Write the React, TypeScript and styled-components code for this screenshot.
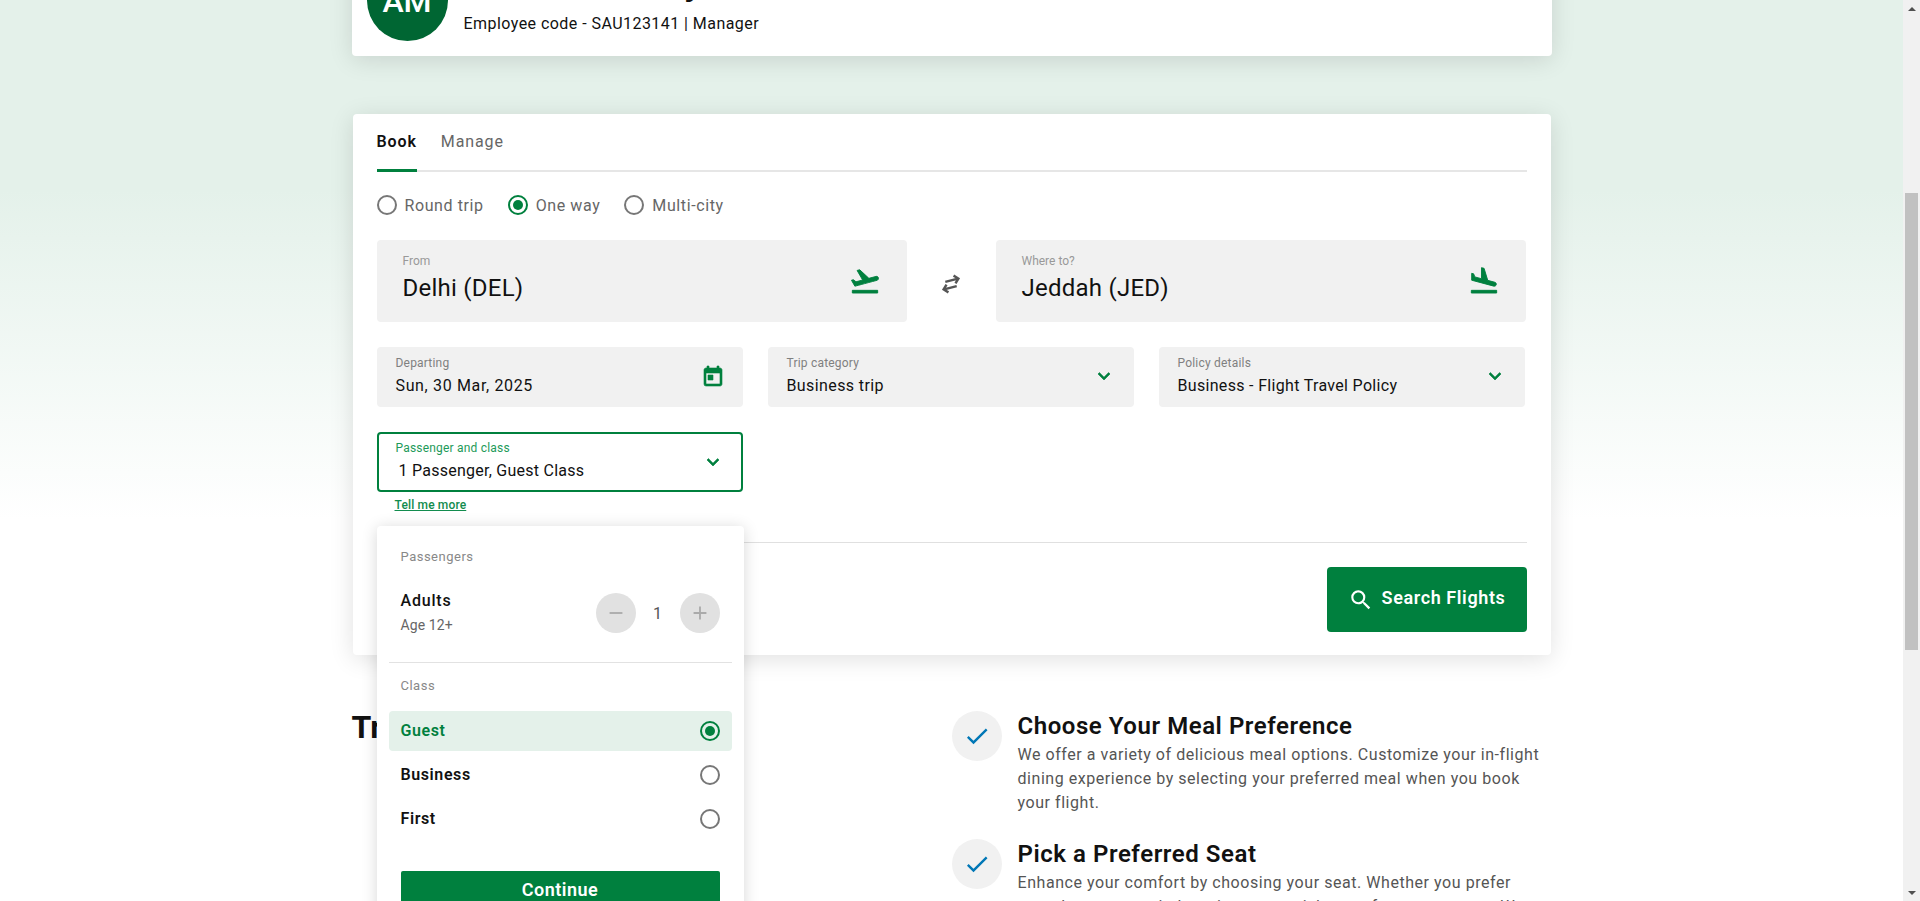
import React from "react";
import styled, { createGlobalStyle } from "styled-components";
import { MdFlightLand, MdFlightTakeoff, MdSearch, MdToday, MdExpandMore, MdCheck, MdAdd, MdRemove } from "react-icons/md";

const green = "#00803e";

const Global = createGlobalStyle`
  html, body { margin: 0; padding: 0; height: 901px; overflow: hidden; background: #fff; }
  body { font-family: Roboto, "Liberation Sans", sans-serif; color: #111; }
  * { box-sizing: border-box; }
`;

const Shell = styled.div`
  display: flex;
  height: 901px;
  overflow: hidden;
`;
const Viewport = styled.main`
  flex: 1;
  min-width: 0;
  height: 901px;
  overflow: hidden;
  background: linear-gradient(180deg, #e4f1ea 0, #e4f1ea 190px, #ffffff 520px);
`;
const Content = styled.div`
  width: 1200px;
  margin: -54px auto 0;
`;
const HeaderCard = styled.section`
  height: 110px;
  background: #fff;
  border-radius: 4px;
  box-shadow: 0 4px 24px rgba(0, 0, 0, 0.12);
  display: flex;
  align-items: flex-end;
  padding: 0 0 15px 15px;
  gap: 16px;
`;
const Avatar = styled.div`
  width: 81px;
  height: 81px;
  border-radius: 50%;
  background: #006633;
  color: #fff;
  font-size: 32px;
  font-weight: 500;
  display: flex;
  align-items: center;
  justify-content: center;
  flex: none;
`;
const Who = styled.div`
  display: flex;
  flex-direction: column;
  padding-bottom: 7px;
`;
const Name = styled.h1`
  margin: 0 0 11px;
  font-size: 36px;
  line-height: 42px;
  font-weight: 700;
  color: #111;
`;
const Code = styled.div`
  font-size: 16px;
  line-height: 20px;
  letter-spacing: 0.45px;
  color: #111;
`;
const BookingCard = styled.section`
  margin: 58px 1px 0;
  height: 541px;
  background: #fff;
  border-radius: 4px;
  padding: 0 24px;
  box-shadow: 0 4px 24px rgba(0, 0, 0, 0.12);
`;
const Tabs = styled.div`
  display: flex;
  gap: 24px;
  height: 58px;
  border-bottom: 2px solid #e6e6e6;
`;
const Tab = styled.div<{ $active?: boolean }>`
  height: 58px;
  padding-top: 18px;
  font-size: 16px;
  line-height: 20px;
  letter-spacing: 0.9px;
  font-weight: ${(p) => (p.$active ? 600 : 400)};
  color: ${(p) => (p.$active ? "#111" : "#666")};
  border-bottom: 3px solid ${(p) => (p.$active ? green : "transparent")};
`;
const TripRow = styled.div`
  display: flex;
  gap: 24px;
  margin-top: 23px;
  height: 20px;
`;
const TripOption = styled.label`
  display: flex;
  align-items: center;
  gap: 8px;
  font-size: 16px;
  letter-spacing: 0.6px;
  color: #666;
`;
const Radio = styled.span<{ $on?: boolean }>`
  width: 20px;
  height: 20px;
  border-radius: 50%;
  flex: none;
  border: 2px solid ${(p) => (p.$on ? green : "#777")};
  display: flex;
  align-items: center;
  justify-content: center;
  &::after {
    content: "";
    width: 10px;
    height: 10px;
    border-radius: 50%;
    background: ${(p) => (p.$on ? green : "transparent")};
  }
`;
const Cities = styled.div`
  display: flex;
  align-items: center;
  margin-top: 25px;
`;
const CityField = styled.div`
  width: 530px;
  height: 82px;
  border-radius: 4px;
  background: #f1f1f1;
  padding: 14px 26px 0 26px;
  display: flex;
  justify-content: space-between;
  color: ${green};
`;
const CityLabel = styled.div`
  font-size: 12px;
  line-height: 14px;
  color: #999;
`;
const CityValue = styled.div`
  margin-top: 5px;
  font-size: 24px;
  line-height: 30px;
  letter-spacing: 0.25px;
  color: #111;
`;
const CityIcon = styled.span`
  display: flex;
  margin-top: 11px;
  svg {
    stroke-width: 0.7;
  }
  svg path[fill="none"] {
    stroke: none;
  }
`;
const SwapBox = styled.div`
  width: 89px;
  padding-top: 6px;
  display: flex;
  justify-content: center;
  color: #555;
`;
const Row = styled.div`
  display: grid;
  grid-template-columns: repeat(3, 366px);
  column-gap: 25px;
  margin-top: 25px;
`;
const SelectBox = styled.div<{ $focus?: boolean }>`
  height: 60px;
  border-radius: 4px;
  background: ${(p) => (p.$focus ? "#fff" : "#f1f1f1")};
  border: ${(p) => (p.$focus ? `2px solid ${green}` : "none")};
  padding: ${(p) => (p.$focus ? "7px 16px 0 16px" : "9px 18px 0 18px")};
  display: flex;
  justify-content: space-between;
  align-items: flex-start;
`;
const SelectLabel = styled.div<{ $focus?: boolean }>`
  font-size: 12px;
  line-height: 14px;
  letter-spacing: 0.2px;
  padding-left: 1px;
  color: ${(p) => (p.$focus ? "#1d9a59" : "#808080")};
`;
const SelectValue = styled.div<{ $focus?: boolean; $spacing: number }>`
  margin-top: 5px;
  padding-left: ${(p) => (p.$focus ? "4px" : "1px")};
  font-size: 16px;
  line-height: 22px;
  letter-spacing: ${(p) => p.$spacing}px;
  color: #111;
`;
const SelectIcon = styled.span<{ $top: number }>`
  display: flex;
  margin-top: ${(p) => p.$top}px;
  color: ${green};
  svg {
    stroke-width: 0.6;
  }
  svg path[fill="none"] {
    stroke: none;
  }
`;
const PassengerWrap = styled.div`
  position: relative;
`;
const TellMore = styled.a`
  display: block;
  margin: 5px 0 0 18px;
  font-size: 12px;
  line-height: 16px;
  font-weight: 500;
  letter-spacing: 0.15px;
  color: #128c4e;
  text-decoration: underline;
`;
const Divider = styled.div`
  margin-top: 29px;
  height: 1px;
  background: #e0e0e0;
`;
const Actions = styled.div`
  display: flex;
  justify-content: flex-end;
  margin-top: 24px;
`;
const SearchButton = styled.button`
  width: 200px;
  height: 65px;
  border: none;
  border-radius: 4px;
  background: ${green};
  color: #fff;
  font-family: inherit;
  font-size: 18px;
  font-weight: 600;
  letter-spacing: 0.6px;
  display: flex;
  align-items: center;
  justify-content: center;
  gap: 8px;
`;
const SearchLabel = styled.span`
  margin-bottom: 4px;
`;
const Dropdown = styled.div`
  position: absolute;
  top: 94px;
  left: 0;
  width: 367px;
  height: 460px;
  background: #fff;
  border-radius: 4px;
  box-shadow: 0 2px 16px rgba(0, 0, 0, 0.16);
  padding: 23px 12px 0;
  z-index: 2;
`;
const DropLabel = styled.div`
  padding-left: 12px;
  font-size: 13px;
  letter-spacing: 0.5px;
  line-height: 16px;
  color: #888;
`;
const ClassLabel = styled(DropLabel)`
  margin: 15px 0 17px;
`;
const PaxRow = styled.div`
  display: flex;
  align-items: center;
  justify-content: space-between;
  padding: 0 12px;
  margin-top: 26px;
`;
const PaxInfo = styled.div`
  margin: -1px 0 1px;
`;
const PaxName = styled.div`
  font-size: 16px;
  line-height: 22px;
  font-weight: 500;
  letter-spacing: 0.8px;
`;
const PaxAge = styled.div`
  margin-top: 4px;
  font-size: 14px;
  line-height: 18px;
  letter-spacing: 0.1px;
  color: #666;
`;
const Stepper = styled.div`
  display: flex;
  align-items: center;
`;
const StepButton = styled.span`
  width: 40px;
  height: 40px;
  border-radius: 50%;
  background: #e1e1e1;
  color: #aaa;
  display: flex;
  align-items: center;
  justify-content: center;
`;
const StepCount = styled.span`
  width: 44px;
  text-align: center;
  font-size: 16px;
  color: #555;
`;
const DropDivider = styled.div`
  height: 1px;
  margin-top: 27px;
  background: #e2e2e2;
`;
const ClassRow = styled.div<{ $on?: boolean }>`
  height: 40px;
  margin-top: 4px;
  padding: 0 12px;
  border-radius: 4px;
  background: ${(p) => (p.$on ? "#e4f1ea" : "transparent")};
  color: ${(p) => (p.$on ? green : "#111")};
  font-size: 16px;
  font-weight: 600;
  letter-spacing: 0.6px;
  display: flex;
  align-items: center;
  justify-content: space-between;
`;
const ClassName = styled.span`
  margin-bottom: 2px;
`;
const ContinueButton = styled.button`
  display: block;
  width: 319px;
  height: 37px;
  margin: 32px 0 0 12px;
  border: none;
  border-radius: 2px;
  background: ${green};
  color: #fff;
  font-family: inherit;
  font-size: 18px;
  font-weight: 600;
  letter-spacing: 0.5px;
`;
const Lower = styled.section`
  display: grid;
  grid-template-columns: 600px 535px;
  margin-top: 56px;
  align-items: start;
`;
const LowerHeading = styled.h2`
  margin: -4px 0 0;
  font-size: 32px;
  line-height: 40px;
  font-weight: 700;
`;
const Benefits = styled.div`
  display: flex;
  flex-direction: column;
  gap: 24px;
`;
const Benefit = styled.article`
  display: flex;
  gap: 16px;
  width: 600px;
`;
const CheckCircle = styled.span`
  width: 50px;
  height: 50px;
  border-radius: 50%;
  flex: none;
  background: #f1f1f1;
  color: #0077b6;
  display: flex;
  align-items: center;
  justify-content: center;
`;
const BenefitTitle = styled.h3`
  margin: 1px 0 0;
  font-size: 24px;
  line-height: 28px;
  font-weight: 600;
  letter-spacing: 0.55px;
  color: #111;
`;
const BenefitBody = styled.p`
  margin: 3px 0 0;
  max-width: 530px;
  font-size: 16px;
  line-height: 24px;
  letter-spacing: 0.55px;
  color: #555;
`;
const Scrollbar = styled.aside`
  width: 17px;
  height: 901px;
  flex: none;
  background: #f1f1f1;
  display: flex;
  flex-direction: column;
  align-items: center;
`;
const ScrollArrow = styled.span<{ $down?: boolean }>`
  height: 17px;
  width: 17px;
  display: flex;
  align-items: center;
  justify-content: center;
  &::after {
    content: "";
    border-left: 4px solid transparent;
    border-right: 4px solid transparent;
    border-${(p) => (p.$down ? "top" : "bottom")}: 4px solid #505050;
  }
`;
const ScrollTrack = styled.div`
  flex: 1;
  width: 100%;
  padding: 176px 2px 0;
`;
const ScrollThumb = styled.div`
  height: 457px;
  background: #c1c1c1;
`;

const SwapIcon = () => (
  <svg width="24" height="24" viewBox="0 0 24 24" fill="none" stroke="currentColor" strokeWidth="2.4">
    <g transform="rotate(-14 12 12)">
      <path d="M7 8.5h13M16.5 4.5l4 4-4 4" />
      <path d="M17 15.5H4M7.5 11.5l-4 4 4 4" />
    </g>
  </svg>
);

const Chevron = () => <MdExpandMore size={24} />;

const App = () => (
  <>
    <Global />
    <Shell>
      <Viewport>
        <Content>
          <HeaderCard>
            <Avatar>AM</Avatar>
            <Who>
              <Name>Ahmad Murray</Name>
              <Code>Employee code - SAU123141 | Manager</Code>
            </Who>
          </HeaderCard>

          <BookingCard>
            <Tabs>
              <Tab $active>Book</Tab>
              <Tab>Manage</Tab>
            </Tabs>
            <TripRow>
              <TripOption><Radio />Round trip</TripOption>
              <TripOption><Radio $on />One way</TripOption>
              <TripOption><Radio />Multi-city</TripOption>
            </TripRow>
            <Cities>
              <CityField>
                <div>
                  <CityLabel>From</CityLabel>
                  <CityValue>Delhi (DEL)</CityValue>
                </div>
                <CityIcon><MdFlightTakeoff size={32} /></CityIcon>
              </CityField>
              <SwapBox><SwapIcon /></SwapBox>
              <CityField>
                <div>
                  <CityLabel>Where to?</CityLabel>
                  <CityValue>Jeddah (JED)</CityValue>
                </div>
                <CityIcon><MdFlightLand size={32} /></CityIcon>
              </CityField>
            </Cities>
            <Row>
              <SelectBox>
                <div>
                  <SelectLabel>Departing</SelectLabel>
                  <SelectValue $spacing={0.65}>Sun, 30 Mar, 2025</SelectValue>
                </div>
                <SelectIcon $top={9}><MdToday size={24} /></SelectIcon>
              </SelectBox>
              <SelectBox>
                <div>
                  <SelectLabel>Trip category</SelectLabel>
                  <SelectValue $spacing={0.4}>Business trip</SelectValue>
                </div>
                <SelectIcon $top={8}><Chevron /></SelectIcon>
              </SelectBox>
              <SelectBox>
                <div>
                  <SelectLabel>Policy details</SelectLabel>
                  <SelectValue $spacing={0.32}>Business - Flight Travel Policy</SelectValue>
                </div>
                <SelectIcon $top={8}><Chevron /></SelectIcon>
              </SelectBox>
            </Row>
            <Row>
              <PassengerWrap>
                <SelectBox $focus>
                  <div>
                    <SelectLabel $focus>Passenger and class</SelectLabel>
                    <SelectValue $focus $spacing={0.25}>1 Passenger, Guest Class</SelectValue>
                  </div>
                  <SelectIcon $top={9}><Chevron /></SelectIcon>
                </SelectBox>
                <TellMore>Tell me more</TellMore>
                <Dropdown>
                  <DropLabel>Passengers</DropLabel>
                  <PaxRow>
                    <PaxInfo>
                      <PaxName>Adults</PaxName>
                      <PaxAge>Age 12+</PaxAge>
                    </PaxInfo>
                    <Stepper>
                      <StepButton><MdRemove size={22} /></StepButton>
                      <StepCount>1</StepCount>
                      <StepButton><MdAdd size={22} /></StepButton>
                    </Stepper>
                  </PaxRow>
                  <DropDivider />
                  <ClassLabel>Class</ClassLabel>
                  <ClassRow $on><ClassName>Guest</ClassName><Radio $on /></ClassRow>
                  <ClassRow><ClassName>Business</ClassName><Radio /></ClassRow>
                  <ClassRow><ClassName>First</ClassName><Radio /></ClassRow>
                  <ContinueButton>Continue</ContinueButton>
                </Dropdown>
              </PassengerWrap>
            </Row>
            <Divider />
            <Actions>
              <SearchButton><MdSearch size={26} /><SearchLabel>Search Flights</SearchLabel></SearchButton>
            </Actions>
          </BookingCard>

          <Lower>
            <LowerHeading>Travel Extras</LowerHeading>
            <Benefits>
              <Benefit>
                <CheckCircle><MdCheck size={28} /></CheckCircle>
                <div>
                  <BenefitTitle>Choose Your Meal Preference</BenefitTitle>
                  <BenefitBody>We offer a variety of delicious meal options. Customize your in-flight dining experience by selecting your preferred meal when you book your flight.</BenefitBody>
                </div>
              </Benefit>
              <Benefit>
                <CheckCircle><MdCheck size={28} /></CheckCircle>
                <div>
                  <BenefitTitle>Pick a Preferred Seat</BenefitTitle>
                  <BenefitBody>Enhance your comfort by choosing your seat. Whether you prefer more legroom, a window view, or an aisle seat for easy access. We have the right seat for every journey.</BenefitBody>
                </div>
              </Benefit>
            </Benefits>
          </Lower>
        </Content>
      </Viewport>
      <Scrollbar>
        <ScrollArrow />
        <ScrollTrack><ScrollThumb /></ScrollTrack>
        <ScrollArrow $down />
      </Scrollbar>
    </Shell>
  </>
);

export default App;
